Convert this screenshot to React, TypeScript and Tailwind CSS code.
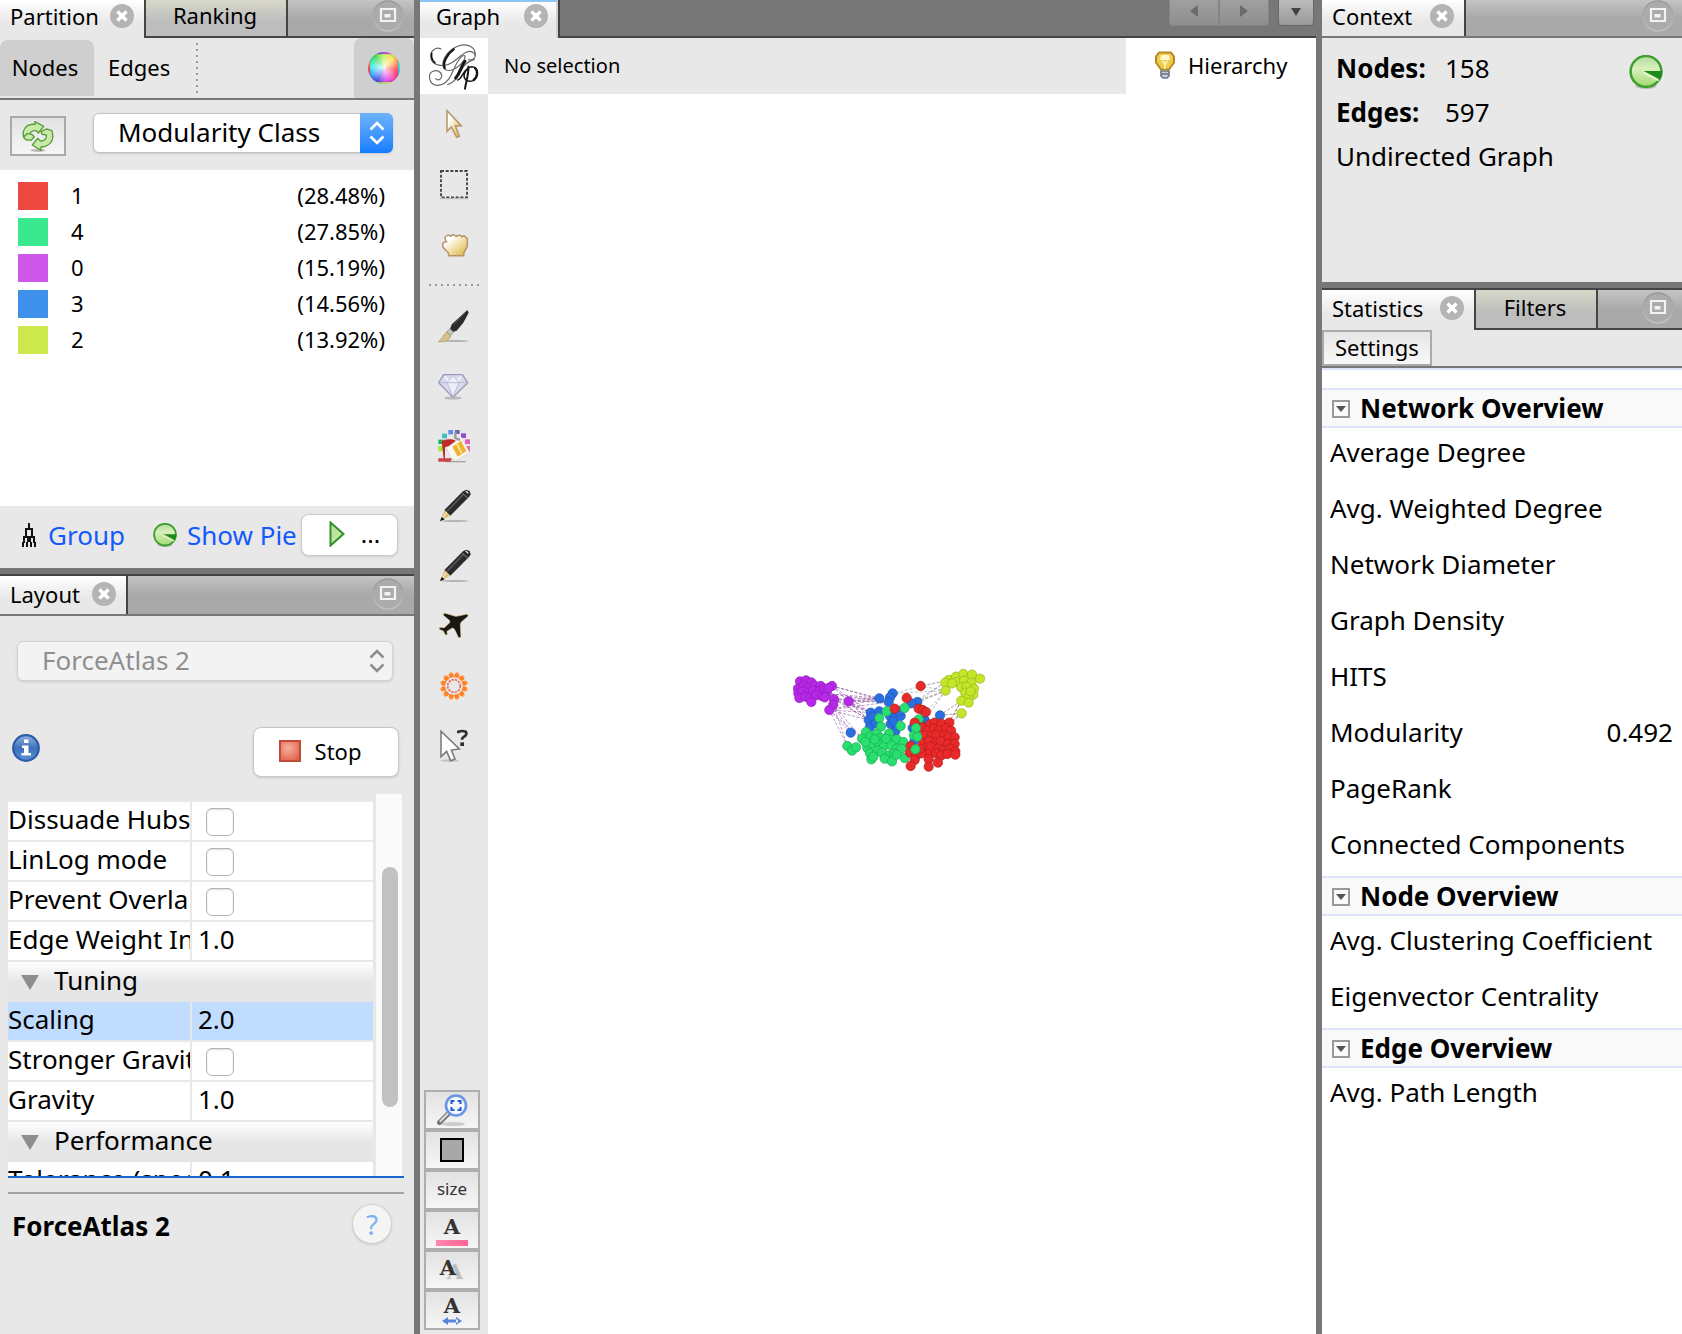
import { useId, type ReactNode } from "react";

const font = "font-['Noto_Sans','Open_Sans',sans-serif] [font-variant-ligatures:none]";
const strip = "flex bg-linear-to-b from-[#c4c4c4] to-[#a9a9a9] to-50%";

/* ---------- tab strip ---------- */

function CloseButton({ label }: { label: string }) {
  return (
    <button aria-label={`Close ${label}`} className="ml-auto shrink-0">
      <svg viewBox="0 0 24 24" className="block size-6">
        <circle cx="12" cy="12" r="12" fill="#b4b4b4" />
        <path d="M7.5 7.5l9 9M16.5 7.5l-9 9" stroke="#fff" strokeWidth="3.4" />
        <path d="M12 9.5v5M9.5 12h5" stroke="#fff" strokeWidth="2" />
      </svg>
    </button>
  );
}

function MaximizeButton() {
  const id = useId();
  return (
    <button aria-label="Maximize panel">
      <svg viewBox="0 0 32 32" className="block size-8">
        <defs>
          <linearGradient id={id} x1="0" y1="0" x2="0" y2="1">
            <stop offset="0" stopColor="#989898" />
            <stop offset="1" stopColor="#c0c0c0" />
          </linearGradient>
        </defs>
        <circle cx="16" cy="16" r="15" fill="#ababab" stroke={`url(#${id})`} strokeWidth="1.6" />
        <path d="M9 9h14v12H9z" fill="none" stroke="#f2f2f2" strokeWidth="2.2" />
        <path d="M12.5 14h6v3.5h-6z" fill="#f2f2f2" />
      </svg>
    </button>
  );
}

function ActiveTab({ label, size, top }: { label: string; size: string; top?: boolean }) {
  return (
    <div
      className={`flex shrink-0 items-start bg-linear-to-b from-white to-[#e8e8e8] to-60% pl-[10px] pr-[10px] ${size} ${top ? "pt-1" : "pt-[6px]"}`}
    >
      <span className="text-[22px] leading-6">{label}</span>
      <CloseButton label={label} />
    </div>
  );
}

function IdleTab({ label, size, top }: { label: string; size: string; top?: boolean }) {
  return (
    <button
      className={`shrink-0 border-x-2 border-b-2 border-[#444] bg-linear-to-b from-[#d8d8ca] to-[#bdbdbd] to-60% pr-[2px] text-[22px] leading-6 ${size} ${top ? "pb-[6px]" : "pb-1"}`}
    >
      {label}
    </button>
  );
}

/* ---------- small drawings ---------- */

function Pie({ className }: { className: string }) {
  const id = useId();
  return (
    <svg viewBox="0 0 32 32" className={className}>
      <defs>
        <linearGradient id={id} x1="0" y1="0" x2="0" y2="1">
          <stop offset="0" stopColor="#b6dba0" />
          <stop offset=".4" stopColor="#d8f0bc" />
          <stop offset="1" stopColor="#a4d870" />
        </linearGradient>
      </defs>
      <ellipse cx="16" cy="29" rx="10" ry="3" fill="#000" opacity=".2" />
      <circle cx="16" cy="15.5" r="14.5" fill={`url(#${id})`} stroke="#3f9f30" strokeWidth="2.4" />
      <path d="M14 15h17.5a15 15 0 0 1-2.5 8z" fill="#1f8a1c" />
      <path d="M14 17l14 7" stroke="#e8f8dc" strokeWidth="1.6" />
    </svg>
  );
}

function Chevrons({ color }: { color: string }) {
  return (
    <svg viewBox="0 0 16 24" className="h-6 w-4" fill="none" stroke={color} strokeWidth="2.6">
      <path d="M1.5 8.5L8 2l6.5 6.500M1.5 15.5L8 22l6.5-6.5" />
    </svg>
  );
}

function RefreshIcon() {
  return (
    <svg viewBox="66 354 102 102" className="h-[34px] w-[34px]">
      <ellipse cx="117" cy="448" rx="22" ry="5" fill="#bbb" />
      <g fill="#c8eaa8" stroke="#5a9a3c" strokeWidth="4" strokeLinejoin="round">
        <path d="M74 409c-6-24 8-41 34-39v-8l26 14-16 20-6-7c-16-1-22 6-18 20l-10 8z" />
        <path d="M160 395c6 24-8 41-34 43v10l-26-16 16-20 8 8c14 0 20-8 18-18l-12-2-4-8 16-8 16 4z" />
        <path d="M84 398l14 2 8 8-10 10-16-2-6-8z" />
      </g>
    </svg>
  );
}

function Logo() {
  return (
    <svg viewBox="15 114 204 168" className="block h-14 w-[68px]" fill="none" strokeLinecap="round">
      <g stroke="#666" strokeWidth="3.5">
        <path d="M78 147c-16-8-32 6-31 24 2 26 40 34 66 16 26-18 44-44 64-28 10 10-2 24-16 20" />
        <path d="M180 166c4-24-22-38-50-28-34 12-56 50-42 68 12 14 44-2 58-24 8-14 4-20-6-12-14 12-22 34-30 52-8 20-26 36-46 34-22-4-28-34-10-42 14-6 28 4 26 16-2 10-12 12-18 6" />
        <path d="M178 178c-18 6-32 14-40 34-8 18-22 36-40 42" />
      </g>
      <g stroke="#161616">
        <path d="M50 160c-2 12 2 22 10 28" strokeWidth="5" />
        <path d="M116 148c-20 14-34 40-27 56" strokeWidth="7" />
        <path d="M150 184c-12 14-14 34-28 50" strokeWidth="9" />
        <path d="M128 240c14 0 16-38 42-40 22 0 20 34 4 42-16 6-30-4-26-20 2-8 8-14 12-16" strokeWidth="4.5" />
        <path d="M180 204c10 10 8 26-4 36" strokeWidth="7" />
        <path d="M160 200c2 20-6 40-10 66" strokeWidth="6" />
      </g>
    </svg>
  );
}

function ToolIcon({ y, children }: { y: number; children: ReactNode }) {
  return (
    <svg viewBox={`66 ${y} 102 102`} className="h-[34px] w-[34px]">
      {children}
    </svg>
  );
}

function Pencil() {
  return (
    <>
      <ellipse cx="120" cy="753" rx="40" ry="3" fill="#b4b4b4" />
      <path d="M144 664l10-5 10 4 3 10-5 8-56 56-18-17z" fill="#2b2b2b" />
      <path d="M96 724l50-52" stroke="#5c5c5c" strokeWidth="4" />
      <path d="M142 670l18 16" stroke="#8a8a8a" strokeWidth="3" />
      <path d="M152 663l8 7" stroke="#ddd" strokeWidth="4" />
      <path d="M88 720l18 17-30 16z" fill="#dcc27e" />
      <path d="M95 726l-14 22" stroke="#fff1c8" strokeWidth="3" />
      <path d="M80 741l9 7-14 6z" fill="#111" />
    </>
  );
}

const tan = "#b5946a";
const burst = Array.from({ length: 12 }, (_, i) => i * 30);

const selectionTools: { label: string; icon: ReactNode }[] = [
  {
    label: "Direct selection",
    icon: (
      <ToolIcon y={321}>
        <defs>
          <linearGradient id="gold" x1="0" y1="0" x2="1" y2="1">
            <stop offset=".25" stopColor="#fff" />
            <stop offset="1" stopColor="#dfb12f" />
          </linearGradient>
        </defs>
        <path d="M96 332v62l13-13 16 31 8-3-12-32h18z" fill="url(#gold)" stroke={tan} strokeWidth="4.5" />
      </ToolIcon>
    ),
  },
  {
    label: "Rectangle selection",
    icon: (
      <ToolIcon y={501}>
        <path d="M78 513h78v79H78z" fill="none" stroke="#444" strokeWidth="5.5" strokeDasharray="9 5" />
        <path d="M74 596h86" stroke="#bbb" strokeWidth="3" />
      </ToolIcon>
    ),
  },
  {
    label: "Drag",
    icon: (
      <ToolIcon y={681}>
        <path
          d="M102 767l-3-10-15-15-1-12 9-5-2-14 9-6 8 3 8-4 9 5 9-4 8 4 8-1 8 9v22l-10 18-1 10z"
          fill="url(#gold)"
          stroke={tan}
          strokeWidth="4.5"
        />
        <path d="M92 724l5 3M107 706v5M124 706v5M140 708v5" stroke={tan} strokeWidth="4" />
      </ToolIcon>
    ),
  },
];

const editTools: { label: string; icon: ReactNode }[] = [
  {
    label: "Painter",
    icon: (
      <ToolIcon y={117}>
        <ellipse cx="122" cy="213" rx="38" ry="3" fill="#b0b0b0" />
        <path d="M157 120l4 8-16 30-20 24-12 4-8-10 6-14 24-22z" fill="#2b2b2b" />
        <path d="M116 164l34-36" stroke="#5a5a5a" strokeWidth="3" />
        <path d="M105 176l10 10-8 10-12-10z" fill="#c8c8c8" stroke="#777" strokeWidth="2" />
        <path d="M95 187l12 10c-2 14-20 20-37 18 12-6 14-22 25-28z" fill="#d8c190" stroke="#a88e55" strokeWidth="2" />
      </ToolIcon>
    ),
  },
  {
    label: "Sizer",
    icon: (
      <ToolIcon y={297}>
        <ellipse cx="114" cy="384" rx="26" ry="5" fill="#bbb" />
        <path d="M86 314h56l16 24-44 44-43-44z" fill="#d9daea" stroke="#9a9bb8" strokeWidth="4" strokeLinejoin="round" />
        <path d="M71 338h87M96 338l18 42 18-42-18-22z" fill="#eeeef8" stroke="#b9badb" strokeWidth="3" />
        <path d="M90 320l10 12M138 320l-10 12" stroke="#fff" strokeWidth="4" />
      </ToolIcon>
    ),
  },
  {
    label: "Brush",
    icon: (
      <ToolIcon y={477}>
        <rect x="70" y="509" width="15" height="13" fill="#22b05a" />
        <rect x="70" y="528" width="16" height="16" fill="#a4e83a" />
        <rect x="81" y="491" width="15" height="14" fill="#42bfc4" />
        <rect x="100" y="480" width="14" height="13" fill="#5b8fe8" />
        <rect x="120" y="480" width="14" height="12" fill="#6a62c4" />
        <rect x="138" y="490" width="15" height="14" fill="#8e50c8" />
        <rect x="150" y="508" width="15" height="14" fill="#e060c0" />
        <rect x="152" y="528" width="13" height="16" fill="#f06890" />
        <path d="M92 575h60" stroke="#a4a4a4" strokeWidth="4" />
        <path d="M80 514c10-8 30-8 42-2l-14 14-18 6v34H86z" fill="#c02a2a" />
        <path d="M70 565h42l-6 10H70z" fill="#c84444" />
        <path d="M94 534l46-32 24 46-42 24-14-8z" fill="#faf8f4" stroke="#d0ccc6" strokeWidth="2" />
        <path d="M112 530l26-18 16 32-26 16z" fill="#efb330" />
        <path d="M126 522l14 28" stroke="#fbe39a" strokeWidth="6" />
        <path d="M121 484v20l14 6" fill="none" stroke="#9a9a9a" strokeWidth="7" />
      </ToolIcon>
    ),
  },
  { label: "Node pencil", icon: <ToolIcon y={657}><Pencil /></ToolIcon> },
  { label: "Edge pencil", icon: <ToolIcon y={657}><Pencil /></ToolIcon> },
  {
    label: "Shortest path",
    icon: (
      <ToolIcon y={267}>
        <path
          d="M157 282l3 6-22 19-2 8 2 36-7 3-13-27-6-3-16 10 1 10-6 1-6-12-13-5 2-6 14 1 17-16-2-6-19-16 4-6 34 10 7-1z"
          fill="#1a1714"
          stroke="#e6cf9c"
          strokeWidth="2"
        />
      </ToolIcon>
    ),
  },
  {
    label: "Heat map",
    icon: (
      <ToolIcon y={447}>
        <g transform="translate(117 498)">
          {burst.map((a) => (
            <g key={a} transform={`rotate(${a + 15})`}>
              <circle cx="0" cy="-38" r="5" fill="#ffa860" />
              <rect x="-7" y="-38" width="14" height="12" rx="2" fill="#ff8126" />
            </g>
          ))}
          <circle r="19" fill="none" stroke="#f4685a" strokeWidth="5" strokeDasharray="7 3" />
        </g>
      </ToolIcon>
    ),
  },
  {
    label: "Edit",
    icon: (
      <ToolIcon y={627}>
        <ellipse cx="104" cy="722" rx="28" ry="4" fill="#c4c4c4" />
        <path d="M78 634v76l17-16 12 28 13-5-11-27 24-3z" fill="#fff" stroke="#777" strokeWidth="4.5" />
        <path d="M130 640v-5q11-4 22 0c4 5 2 12-5 15q-6 3-6 9" fill="none" stroke="#2e2e2e" strokeWidth="8" />
        <path d="M136 667h11v11h-11z" fill="#2e2e2e" />
      </ToolIcon>
    ),
  },
];

const displayTools: { label: string; icon: ReactNode }[] = [
  {
    label: "Center on graph",
    icon: (
      <svg viewBox="0 0 32 34" className="h-[34px] w-8">
        <ellipse cx="17" cy="31" rx="12" ry="2" fill="#ccc" />
        <path d="M13 20L3.500 29.500" stroke="#777" strokeWidth="5" strokeLinecap="round" />
        <path d="M12.500 20L4 28.500" stroke="#ddd" strokeWidth="2" />
        <circle cx="20" cy="12.5" r="10" fill="#f4f8ff" stroke="#6a95e4" strokeWidth="2.6" />
        <path d="M15.500 11V8H18.500M21.500 8H24.500V11M24.500 14V17H21.500M18.500 17H15.500V14" fill="none" stroke="#2f62c8" strokeWidth="2.2" />
      </svg>
    ),
  },
  { label: "Background color", icon: <span className="size-6 border-2 border-black bg-[#a8a8a8]" /> },
  { label: "Reset size", icon: <span className="pb-[2px] text-[17px] leading-[20px] text-[#333]">size</span> },
  {
    label: "Label color",
    icon: (
      <span className="flex flex-col items-center">
        <b className="font-['DejaVu_Serif',serif] text-[21px] leading-[26px] text-[#333]">A</b>
        <i className="h-[6px] w-8 bg-linear-to-r from-[#ff88b0] to-[#ff6490]" />
      </span>
    ),
  },
  {
    label: "Label shadow",
    icon: (
      <span className="mb-1 mr-2 font-['DejaVu_Serif',serif] text-[21px] font-bold leading-[26px] text-[#333] [text-shadow:7px_4px_1px_#bbb]">
        A
      </span>
    ),
  },
  {
    label: "Label size",
    icon: (
      <span className="flex flex-col items-center">
        <b className="font-['DejaVu_Serif',serif] text-[21px] leading-[22px] text-[#333]">A</b>
        <svg viewBox="0 0 20 8" className="h-2 w-5" fill="#5585dd">
          <path d="M0 4l6-4v8zM20 4l-6-4v8zM4 2.500h12v3H4z" />
        </svg>
      </span>
    ),
  },
];

/* ---------- network drawing ---------- */

type Point = [number, number];

const clusters: { color: string; edge: string; points: Point[] }[] = [
  {
    color: "#2a6fe0",
    edge: "#1c54b0",
    points: [
      [298, 115], [338, 100], [330, 112], [326, 126], [412, 126], [394, 130], [272, 158], [298, 154], [266, 180], [270, 200],
      [330, 168], [345, 172], [362, 168], [332, 192], [346, 214], [212, 218], [480, 166], [434, 180], [404, 240], [398, 204],
      [278, 170], [358, 154], [340, 184], [418, 188], [288, 190],
    ],
  },
  {
    color: "#28e070",
    edge: "#1ca452",
    points: [
      [320, 154], [374, 144], [298, 174], [303, 200], [362, 198], [258, 216], [246, 236], [271, 230], [290, 221], [302, 234],
      [327, 221], [334, 240], [350, 238], [370, 246], [262, 264], [276, 250], [298, 252], [312, 258], [334, 256], [350, 266],
      [364, 266], [202, 258], [216, 272], [228, 262], [270, 280], [292, 272], [306, 278], [328, 286], [342, 280], [274, 298],
      [314, 296], [336, 304], [374, 294], [280, 290], [416, 178], [412, 206], [402, 226], [416, 232], [318, 236], [350, 284],
      [284, 238], [256, 246],
    ],
  },
  {
    color: "#ea2a2a",
    edge: "#ac1a1a",
    points: [
      [422, 78], [380, 114], [344, 146], [416, 146], [428, 150], [438, 156], [404, 188], [426, 202], [450, 193], [464, 188],
      [484, 191], [508, 188], [442, 212], [462, 206], [477, 211], [499, 204], [513, 212], [434, 226], [454, 228], [470, 224],
      [492, 226], [506, 230], [524, 232], [430, 248], [447, 242], [468, 248], [482, 244], [504, 252], [524, 252], [392, 258],
      [438, 264], [452, 260], [474, 266], [491, 270], [510, 266], [526, 274], [444, 282], [468, 280], [484, 286], [390, 278],
      [408, 288], [424, 280], [404, 300], [392, 318], [446, 298], [446, 320], [474, 308], [502, 282], [526, 284], [420, 266],
    ],
  },
  { color: "#28e070", edge: "#1ca452", points: [[406, 268], [412, 230], [408, 204]] },
  {
    color: "#b828e8",
    edge: "#8a1eb4",
    points: [
      [60, 64], [78, 61], [94, 67], [54, 86], [71, 78], [86, 83], [104, 77], [122, 78], [55, 100], [68, 94],
      [86, 97], [99, 92], [117, 94], [132, 86], [58, 114], [76, 110], [89, 114], [108, 106], [126, 108], [140, 98],
      [94, 126], [134, 112], [156, 78], [162, 118], [160, 134], [148, 150], [206, 124], [146, 84],
    ],
  },
  {
    color: "#c4e628",
    edge: "#94ae1e",
    points: [
      [506, 60], [528, 50], [550, 42], [576, 44], [600, 56], [496, 68], [530, 66], [552, 62], [574, 68], [544, 82],
      [560, 80], [582, 86], [556, 98], [580, 104], [566, 112], [544, 122], [566, 128], [497, 92], [545, 160], [516, 70], [572, 94],
    ],
  },
];

const links: { from: Point[]; to: Point[]; color: string }[] = [
  {
    from: [[156, 78], [140, 100], [162, 118], [148, 150], [206, 124]],
    to: [[298, 115], [326, 126], [272, 158], [266, 180]],
    color: "#8a4f9a",
  },
  { from: [[148, 150], [160, 134]], to: [[202, 258], [212, 218], [246, 236]], color: "#9a60a8" },
  { from: [[497, 92], [506, 60]], to: [[338, 100], [412, 126], [422, 78], [374, 144]], color: "#8e98a4" },
  { from: [[544, 122], [545, 160]], to: [[480, 166], [508, 188], [496, 206]], color: "#8a5a50" },
  { from: [[497, 92], [394, 130]], to: [[438, 156], [434, 180], [320, 154]], color: "#a88a78" },
];

function Network() {
  return (
    <svg viewBox="0 0 660 360" className="absolute left-[35.3%] top-[566px] h-[120px] w-[220px]" role="img" aria-label="Network graph">
      {links.flatMap((g, k) =>
        g.from.flatMap(([x1, y1], i) =>
          g.to.map(([x2, y2], j) => (
            <line
              key={`${k}-${i}-${j}`}
              x1={x1}
              y1={y1}
              x2={x2}
              y2={y2}
              stroke={g.color}
              strokeWidth="3"
              strokeDasharray="9 5"
              opacity=".6"
            />
          )),
        ),
      )}
      {clusters.map((c, k) => (
        <g key={k} fill={c.color} stroke={c.edge} strokeWidth="2">
          {c.points.map(([x, y], i) => (
            <circle key={i} cx={x} cy={y} r="14" />
          ))}
        </g>
      ))}
    </svg>
  );
}

/* ---------- left column ---------- */

const classes = [
  { name: "1", share: "(28.48%)", swatch: "bg-[#ec4740]" },
  { name: "4", share: "(27.85%)", swatch: "bg-[#3ae88e]" },
  { name: "0", share: "(15.19%)", swatch: "bg-[#cf57ea]" },
  { name: "3", share: "(14.56%)", swatch: "bg-[#3d91ea]" },
  { name: "2", share: "(13.92%)", swatch: "bg-[#cde84a]" },
];

function PartitionPanel() {
  return (
    <section className="flex h-[568px] flex-col bg-[#e8e8e8]">
      <div className={`${strip} h-[38px]`}>
        <ActiveTab label="Partition" size="w-[144px]" top />
        <IdleTab label="Ranking" size="w-[144px]" top />
        <div className="flex flex-1 items-start justify-end border-b-2 border-[#444] pr-[10px]">
          <MaximizeButton />
        </div>
      </div>
      <div className="flex h-[62px] border-b-2 border-[#777] text-[22px]">
        <button className="mt-[2px] h-14 w-[94px] rounded-t-lg bg-[#cfcfcf] pr-1 pb-[2px]">Nodes</button>
        <button className="h-[58px] px-[14px]">Edges</button>
        <span className="ml-3 mt-[5px] h-[50px] w-[2px] bg-[repeating-linear-gradient(to_bottom,#999_0_2px,transparent_2px_6px)]" />
        <button aria-label="Palette" className="ml-auto flex w-[60px] items-center justify-center rounded-t-lg bg-[#cfcfcf]">
          <span className="size-8 rounded-full border-2 border-black/10 bg-[radial-gradient(circle,#fffc_5%,#fff0_70%),conic-gradient(#c8f060,#ffe060_12%,#ff9060_20%,#ff4050_27%,#ff50b0_38%,#d050ff_48%,#5050e0_58%,#40b0ff_68%,#40f0f0_77%,#50e060_90%,#c8f060)]" />
        </button>
      </div>
      <div className="flex h-[70px] items-center pl-[10px]">
        <button
          aria-label="Refresh"
          className="mt-[2px] flex h-10 w-14 items-center justify-center border-2 border-[#aaa] bg-linear-to-b from-[#e2e2e2] to-[#f6f6f6]"
        >
          <RefreshIcon />
        </button>
        <div className="relative mb-1 ml-[27px] h-10 w-[300px]">
          <select
            aria-label="Partition parameter"
            className="h-10 w-full appearance-none rounded-md border border-[#c4c4c4] bg-white pb-[2px] pl-6 text-[26px] leading-9 shadow-sm"
          >
            <option>Modularity Class</option>
          </select>
          <span className="pointer-events-none absolute inset-y-0 right-0 flex w-[33px] items-center justify-center rounded-r-md bg-linear-to-b from-[#6db3fa] to-[#127dfe]">
            <Chevrons color="#fff" />
          </span>
        </div>
      </div>
      <ul className="flex flex-1 flex-col gap-2 bg-white pl-[18px] pr-[29px] pt-3 text-[22px] leading-[26px]">
        {classes.map((c) => (
          <li key={c.name} className="flex items-start">
            <span className={`h-7 w-[30px] ${c.swatch}`} />
            <span className="ml-[23px]">{c.name}</span>
            <span className="ml-auto">{c.share}</span>
          </li>
        ))}
      </ul>
      <div className="flex h-[62px] items-center pb-1 pl-[21px] pr-4 text-[26px] text-[#1459fb]">
        <svg viewBox="0 0 16 24" className="h-6 w-4" fill="none" stroke="#111" strokeWidth="2">
          <path d="M8 0v6M5 14V6h6v8M3 19v-5h4v5M9 19v-5h4v5M2 24v-5M6 24v-5M10 24v-5M14 24v-5M2 19h2M12 19h2" />
        </svg>
        <a href="#group" className="ml-[11px]">Group</a>
        <Pie className="ml-7 size-6 shrink-0" />
        <a href="#pie" className="ml-[10px] whitespace-nowrap">Show Pie</a>
        <button
          aria-label="Apply"
          className="ml-auto flex h-[42px] w-[97px] shrink-0 items-center justify-center gap-4 rounded-lg border border-[#ccc] bg-white pb-[2px] pl-[10px] text-black shadow-sm"
        >
          <svg viewBox="0 0 16 26" className="h-[26px] w-4">
            <path d="M1.500 1.500v23L14.500 13z" fill="#bfe49c" stroke="#2f8f2c" strokeWidth="2" />
          </svg>
          <span className="text-[24px] leading-[30px]">...</span>
        </button>
      </div>
    </section>
  );
}

type Property = { name: string; value?: string; selected?: boolean; group?: boolean };

const properties: Property[] = [
  { name: "Dissuade Hubs" },
  { name: "LinLog mode" },
  { name: "Prevent Overlap" },
  { name: "Edge Weight Influence", value: "1.0" },
  { name: "Tuning", group: true },
  { name: "Scaling", value: "2.0", selected: true },
  { name: "Stronger Gravity" },
  { name: "Gravity", value: "1.0" },
  { name: "Performance", group: true },
  { name: "Tolerance (speed)", value: "0.1" },
];

function PropertyTable() {
  return (
    <table className="w-full table-fixed border-separate border-spacing-0 text-[26px] leading-[34px]">
      <colgroup>
        <col className="w-[184px]" />
        <col />
      </colgroup>
      <tbody>
        {properties.map((p) =>
          p.group ? (
            <tr key={p.name} className="h-10">
              <th colSpan={2} scope="colgroup" className="bg-linear-to-b from-white to-[#e6e6e6] to-50% p-0 text-left font-normal">
                <span className="flex h-10 items-center">
                  <svg viewBox="0 0 18 15" className="ml-[13px] h-[15px] w-[18px]">
                    <path d="M0 0h18L9 15z" fill="#8e8e8e" />
                  </svg>
                  <span className="ml-[15px] pb-1">{p.name}</span>
                </span>
              </th>
            </tr>
          ) : (
            <tr key={p.name} className={`h-10 ${p.selected ? "bg-[#c0dcff]" : "bg-white"}`}>
              <th
                scope="row"
                className="overflow-hidden whitespace-nowrap border-b-2 border-r-2 border-[#e8e8e8] p-0 text-left align-top font-normal"
              >
                {p.name}
              </th>
              <td className="border-b-2 border-[#e8e8e8] p-0 align-top">
                {p.value ? (
                  <input aria-label={p.name} defaultValue={p.value} className="block h-[34px] w-full bg-transparent pl-[6px] outline-none" />
                ) : (
                  <input
                    type="checkbox"
                    aria-label={p.name}
                    className="ml-[14px] mt-[6px] block size-7 appearance-none rounded-md border border-[#b4b4b4] bg-white shadow-[inset_0_1px_2px_#ddd]"
                  />
                )}
              </td>
            </tr>
          ),
        )}
      </tbody>
    </table>
  );
}

function LayoutPanel() {
  return (
    <section className="flex flex-1 flex-col border-t-2 border-[#444] bg-[#e8e8e8]">
      <div className={`${strip} h-10 border-b-2 border-[#777]`}>
        <ActiveTab label="Layout" size="w-[126px]" />
        <div className="flex flex-1 items-start justify-end border-l-2 border-[#444] pr-[10px] pt-[2px]">
          <MaximizeButton />
        </div>
      </div>
      <div className="relative ml-[17px] mt-[25px] h-10 w-[376px]">
        <select
          aria-label="Layout algorithm"
          disabled
          className="h-10 w-full appearance-none rounded-md border border-[#d2d2d2] bg-[#f3f3f3] pb-[2px] pl-6 text-[26px] leading-9 text-[#8f8f8f] opacity-100 shadow-sm"
        >
          <option>ForceAtlas 2</option>
        </select>
        <span className="pointer-events-none absolute inset-y-0 right-0 flex w-[33px] items-center justify-center">
          <Chevrons color="#8f8f8f" />
        </span>
      </div>
      <div className="mt-[46px] flex h-[50px] items-start pl-3 pr-[15px]">
        <button aria-label="Layout information" className="mt-[7px]">
          <svg viewBox="0 0 28 28" className="block size-7">
            <defs>
              <linearGradient id="info" x1="0" y1="0" x2="0" y2="1">
                <stop offset="0" stopColor="#8fb2e0" />
                <stop offset=".5" stopColor="#3d70bb" />
                <stop offset="1" stopColor="#5f90d4" />
              </linearGradient>
            </defs>
            <circle cx="14" cy="14" r="12.8" fill="url(#info)" stroke="#2a5ca8" strokeWidth="2.2" />
            <path d="M12 5.500h4.500V9H12zM10 11.500h6.500V19H19v2.500H9.500V19H12v-5h-2z" fill="#fff" />
          </svg>
        </button>
        <button className="ml-auto flex h-[50px] w-[146px] items-center justify-center gap-[14px] rounded-lg border border-[#c6c6c6] bg-white pb-[2px] pr-3 text-[22px] shadow-sm">
          <span className="size-[22px] border-2 border-[#c24a38] bg-[radial-gradient(circle_at_40%_35%,#f4b0a0,#e0583e)]" />
          Stop
        </button>
      </div>
      <div className="ml-2 mr-[10px] mt-[17px] flex h-[384px] border-b-2 border-[#1768d0]">
        <div className="w-[365px] overflow-hidden pt-2">
          <PropertyTable />
        </div>
        <div className="ml-[3px] w-[26px] bg-[#fafafa] pt-[73px]">
          <div className="ml-[6px] h-60 w-4 rounded-full bg-[#c1c1c1]" />
        </div>
      </div>
      <div className="ml-2 mr-[10px] mt-[14px] flex items-start justify-between border-t-2 border-[#a2a2a2] pl-1 pr-3 pt-[10px]">
        <h2 className="pt-1 text-[26px] font-bold leading-9">ForceAtlas 2</h2>
        <button aria-label="Help" className="size-10 rounded-full border border-[#d0d0d0] bg-[#f4f4f4] text-[28px] leading-9 text-[#78b4f5] shadow-sm">
          ?
        </button>
      </div>
    </section>
  );
}

/* ---------- graph view ---------- */

function GraphView() {
  return (
    <main className="flex min-w-0 flex-1 flex-col bg-white">
      <div className="flex h-[38px] bg-[#777]">
        <div className="flex w-[138px] shrink-0 items-start border-r-2 border-t-2 border-r-[#d0d0d0] border-t-[#8fc4f8] bg-linear-to-b from-white to-[#e8e8e8] to-60% pl-4 pr-2 pt-[2px]">
          <span className="text-[22px] leading-6">Graph</span>
          <CloseButton label="Graph" />
        </div>
        <div className="flex flex-1 items-start justify-end border-b-2 border-l-2 border-[#444] pr-[2px] text-[#6b6b6b]">
          <button
            aria-label="Previous document"
            className="flex h-[26px] w-[50px] items-center justify-center rounded-bl border border-t-0 border-[#858585] bg-linear-to-b from-[#a0a0a0] to-[#8e8e8e] pb-1"
          >
            <svg viewBox="0 0 8 12" className="h-3 w-2" fill="currentColor"><path d="M8 0v12L0 6z" /></svg>
          </button>
          <button
            aria-label="Next document"
            className="flex h-[26px] w-[50px] items-center justify-center rounded-br border border-t-0 border-[#858585] bg-linear-to-b from-[#a0a0a0] to-[#8e8e8e] pb-1"
          >
            <svg viewBox="0 0 8 12" className="h-3 w-2" fill="currentColor"><path d="M0 0v12l8-6z" /></svg>
          </button>
          <button
            aria-label="Document list"
            className="ml-[9px] flex h-[26px] w-9 items-center justify-center rounded-b border border-t-0 border-[#666] bg-linear-to-b from-[#bcbcbc] to-[#999] pb-[2px] text-[#444]"
          >
            <svg viewBox="0 0 10 8" className="h-2 w-[10px]" fill="currentColor"><path d="M0 0h10L5 8z" /></svg>
          </button>
        </div>
      </div>
      <div className="flex flex-1">
        <div className="flex w-[68px] shrink-0 flex-col bg-[#e8e8e8]">
          <div className="bg-white">
            <Logo />
          </div>
          {selectionTools.map((t) => (
            <button key={t.label} aria-label={t.label} className="flex h-15 items-center justify-center">
              {t.icon}
            </button>
          ))}
          <span className="mx-[9px] my-[10px] h-[2px] bg-[repeating-linear-gradient(to_right,#999_0_2px,transparent_2px_6px)]" />
          {editTools.map((t) => (
            <button key={t.label} aria-label={t.label} className="flex h-15 items-center justify-center">
              {t.icon}
            </button>
          ))}
          <div className="mb-1 ml-1 mt-auto flex w-14 flex-col">
            {displayTools.map((t) => (
              <button
                key={t.label}
                aria-label={t.label}
                className="flex h-10 items-center justify-center border-2 border-[#aeaeae] bg-linear-to-b from-[#e2e2e2] to-[#f6f6f6]"
              >
                {t.icon}
              </button>
            ))}
          </div>
        </div>
        <div className="flex min-w-0 flex-1 flex-col">
          <div className="flex h-14 items-center">
            <p className="flex h-full flex-1 items-center bg-[#e8e8e8] pl-4 text-[20px]">No selection</p>
            <button className="flex w-[190px] items-center gap-[13px] pb-[2px] pl-[29px] text-[22px]">
              <svg viewBox="0 0 20 28" className="h-7 w-5">
                <path d="M6 20h8v5l-2 2H8l-2-2z" fill="#c8d0dc" stroke="#6a7688" strokeWidth="1.6" />
                <path d="M6 23h8" stroke="#6a7688" strokeWidth="1.6" />
                <path d="M4 1.500h12l3 4v6l-5 7H6l-5-7v-6z" fill="#f0cc4c" stroke="#b58a28" strokeWidth="2" strokeLinejoin="round" />
                <path d="M6 4h8l1 5H5z" fill="#fff6cc" />
                <path d="M7.500 10l2.500 3 2.500-3M10 13v5" stroke="#fff3b8" strokeWidth="1.8" fill="none" />
              </svg>
              Hierarchy
            </button>
          </div>
          <div className="relative flex-1">
            <Network />
          </div>
        </div>
      </div>
    </main>
  );
}

/* ---------- right column ---------- */

const statistics: { title: string; items: { name: string; value?: string }[] }[] = [
  {
    title: "Network Overview",
    items: [
      { name: "Average Degree" },
      { name: "Avg. Weighted Degree" },
      { name: "Network Diameter" },
      { name: "Graph Density" },
      { name: "HITS" },
      { name: "Modularity", value: "0.492" },
      { name: "PageRank" },
      { name: "Connected Components" },
    ],
  },
  { title: "Node Overview", items: [{ name: "Avg. Clustering Coefficient" }, { name: "Eigenvector Centrality" }] },
  { title: "Edge Overview", items: [{ name: "Avg. Path Length" }] },
];

function ContextPanel() {
  return (
    <section className="h-[282px] bg-[#e8e8e8]">
      <div className={`${strip} h-[38px] border-b-2 border-[#777]`}>
        <ActiveTab label="Context" size="w-[142px]" top />
        <div className="flex flex-1 items-start justify-end border-l-2 border-[#444] pr-2">
          <MaximizeButton />
        </div>
      </div>
      <div className="flex items-start justify-between pl-[14px] pr-[19px] pt-2 text-[26px] leading-[44px]">
        <div>
          <p className="flex"><b className="w-[109px]">Nodes:</b>158</p>
          <p className="flex"><b className="w-[109px]">Edges:</b>597</p>
          <p>Undirected Graph</p>
        </div>
        <Pie className="mt-[9px] size-[34px]" />
      </div>
    </section>
  );
}

function StatisticsPanel() {
  return (
    <section className="flex-1 border-t-2 border-[#444] bg-white">
      <div className={`${strip} h-10`}>
        <ActiveTab label="Statistics" size="w-[152px]" />
        <IdleTab label="Filters" size="w-[124px]" />
        <div className="flex flex-1 items-start justify-end border-b-2 border-[#444] pr-2 pt-[2px]">
          <MaximizeButton />
        </div>
      </div>
      <div className="border-b-2 border-[#777] bg-[#e8e8e8]">
        <button className="block h-9 border-2 border-[#aaa] bg-linear-to-b from-[#e6e6e6] to-[#f8f8f8] px-[11px] pb-[2px] text-[22px] leading-[30px]">
          Settings
        </button>
      </div>
      <div className="border-t-2 border-[#dde4f8] pt-[18px] text-[26px]">
        {statistics.map((s) => (
          <div key={s.title}>
            <h2 className="flex h-10 items-center border-y-2 border-[#dde4f8] bg-[#f9f9f9] pl-[10px] font-bold leading-9">
              <button
                aria-label={`Collapse ${s.title}`}
                className="mr-[10px] mt-[2px] flex size-[18px] items-center justify-center border-2 border-[#999] bg-[#fafafa]"
              >
                <svg viewBox="0 0 10 6" className="h-[6px] w-[10px]" fill="#555"><path d="M0 0h10L5 6z" /></svg>
              </button>
              {s.title}
            </h2>
            {s.items.map((item) => (
              <p key={item.name} className="flex h-14 justify-between whitespace-nowrap pl-2 pr-[9px] pt-[6px] leading-9">
                <span>{item.name}</span>
                {item.value && <span>{item.value}</span>}
              </p>
            ))}
          </div>
        ))}
      </div>
    </section>
  );
}

export default function App() {
  return (
    <div className={`flex min-h-screen gap-[6px] overflow-hidden bg-[#777] text-black ${font}`}>
      <aside className="flex w-[414px] shrink-0 flex-col gap-[6px]">
        <PartitionPanel />
        <LayoutPanel />
      </aside>
      <GraphView />
      <aside className="flex w-[360px] shrink-0 flex-col gap-[6px]">
        <ContextPanel />
        <StatisticsPanel />
      </aside>
    </div>
  );
}
